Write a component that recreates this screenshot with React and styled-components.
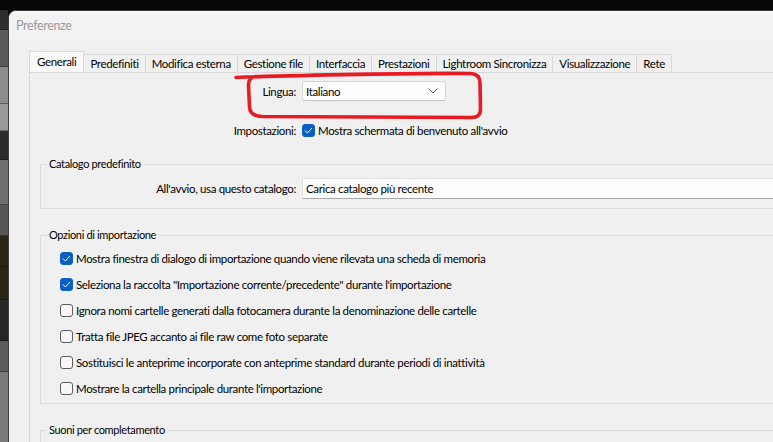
import React from "react";
import styled, { createGlobalStyle } from "styled-components";

const GlobalStyle = createGlobalStyle`
  html, body {
    margin: 0;
    padding: 0;
    background: #060606;
    overflow: hidden;
  }
  body {
    font-family: Lato, "Liberation Sans", sans-serif;
    font-size: 11.5px;
    letter-spacing: -0.35px;
    color: #000;
  }
`;

const Screen = styled.div`
  position: relative;
  width: 773px;
  height: 442px;
  overflow: hidden;
  box-sizing: border-box;
  padding-top: 10px;
  display: flex;
  background: #060606;
`;

const Backdrop = styled.div`
  width: 8px;
  flex-shrink: 0;
  display: flex;
  flex-direction: column;
  border-top: 1px solid #2a2a2a;
`;

const Strip = styled.div`
  height: ${({ h }) => h}px;
  background: ${({ bg }) => bg};
  border-bottom: 1px solid rgba(0, 0, 0, 0.35);
  flex-shrink: 0;
`;

const Window = styled.div`
  flex: 0 0 830px;
  display: flex;
  flex-direction: column;
  background: #f0f0f0;
  border-top-left-radius: 8px;
  border-top: 1px solid #3c3c3c;
  border-left: 1px solid #3c3c3c;
  overflow: hidden;
`;

const TitleBar = styled.div`
  height: 29px;
  flex-shrink: 0;
  display: flex;
  align-items: center;
  padding-left: 7px;
  background: #f3f3f3;
  color: #9b9b9b;
  font-size: 12.5px;
`;

const Body = styled.div`
  flex: 1;
  padding: 11px 0 0 20px;
  display: flex;
  flex-direction: column;
`;

const TabBar = styled.div`
  height: 21px;
  flex-shrink: 0;
  display: flex;
  align-items: flex-end;
`;

const Tab = styled.div`
  height: ${({ $active }) => ($active ? 21 : 18)}px;
  padding: 0 ${({ $active }) => ($active ? 7 : 6)}px;
  box-sizing: border-box;
  display: flex;
  align-items: center;
  padding-bottom: ${({ $active }) => ($active ? 2 : 0)}px;
  background: ${({ $active }) => ($active ? "#f9f9f9" : "#f0f0f0")};
  border: 1px solid #d9d9d9;
  border-bottom: none;
  margin-right: -1px;
  position: relative;
  z-index: ${({ $active }) => ($active ? 1 : 0)};
  white-space: nowrap;
`;

const Panel = styled.div`
  flex: 1;
  border-top: 1px solid #d9d9d9;
  border-left: 1px solid #d9d9d9;
  background: #f0f0f0;
  display: flex;
  flex-direction: column;
`;

const FormRow = styled.div`
  display: flex;
  align-items: center;
  flex-shrink: 0;
  gap: 6px;
  height: ${({ $h }) => $h}px;
  margin-top: ${({ $mt }) => $mt}px;
  margin-bottom: ${({ $mb }) => $mb || 0}px;
`;

const Label = styled.div`
  width: ${({ $w }) => $w}px;
  flex-shrink: 0;
  text-align: right;
  white-space: nowrap;
`;

const Select = styled.div`
  width: 144px;
  height: 20px;
  box-sizing: border-box;
  display: flex;
  align-items: center;
  justify-content: space-between;
  padding: 0 7px 0 3px;
  background: #fdfdfd;
  border: 1px solid #d6d6d6;
  border-bottom-color: #c4c4c4;
  border-radius: 3px;
`;

const TextField = styled.div`
  flex: 1;
  height: 21px;
  box-sizing: border-box;
  display: flex;
  align-items: center;
  padding-left: 3px;
  background: #fdfdfd;
  border: 1px solid #e2e2e2;
  border-bottom-color: #a8a8a8;
  white-space: nowrap;
`;

const Group = styled.fieldset`
  margin: ${({ $mt }) => $mt}px 0 0 10px;
  padding: 0;
  min-width: 0;
  flex-shrink: 0;
  border: 1px solid #dcdcdc;
`;

const Legend = styled.legend`
  font-size: 11px;
  line-height: 14px;
  padding: 0 2px;
  margin-left: 6px;
`;

const CheckList = styled.div`
  display: flex;
  flex-direction: column;
  padding: 3px 0 2px 19px;
  min-height: ${({ $minH }) => $minH || 0}px;
`;

const CheckRow = styled.div`
  display: flex;
  align-items: center;
  gap: 3px;
  height: ${({ $h }) => $h || 26}px;
  white-space: nowrap;
`;

const Box = styled.span`
  width: 13px;
  height: 13px;
  box-sizing: border-box;
  flex-shrink: 0;
  border-radius: 3px;
  display: flex;
  align-items: center;
  justify-content: center;
  background: ${({ $on }) => ($on ? "#0a60c2" : "#f8f8f8")};
  border: 1px solid ${({ $on }) => ($on ? "#0a60c2" : "#5c5c5c")};
`;

const Annotation = styled.svg`
  position: absolute;
  left: 0;
  top: 0;
  pointer-events: none;
`;

function Checkbox({ on }) {
  return (
    <Box $on={on}>
      {on && (
        <svg width="9" height="7" viewBox="0 0 9 7">
          <path d="M1 3.6 L3.4 6 L8 1" fill="none" stroke="#fff" strokeWidth="1" />
        </svg>
      )}
    </Box>
  );
}

const tabs = [
  "Generali",
  "Predefiniti",
  "Modifica esterna",
  "Gestione file",
  "Interfaccia",
  "Prestazioni",
  "Lightroom Sincronizza",
  "Visualizzazione",
  "Rete",
];

const importOptions = [
  ["Mostra finestra di dialogo di importazione quando viene rilevata una scheda di memoria", true],
  ['Seleziona la raccolta "Importazione corrente/precedente" durante l\'importazione', true],
  ["Ignora nomi cartelle generati dalla fotocamera durante la denominazione delle cartelle", false],
  ["Tratta file JPEG accanto ai file raw come foto separate", false],
  ["Sostituisci le anteprime incorporate con anteprime standard durante periodi di inattività", false],
  ["Mostrare la cartella principale durante l'importazione", false],
];

const strips = [
  [18, "#2e2e2e"],
  [36, "#5a5a5a"],
  [36, "#8c8c8c"],
  [26, "#9a9a9a"],
  [28, "#2c2c2c"],
  [44, "#6e6e6e"],
  [30, "#555555"],
  [30, "#2a2616"],
  [32, "#2a2616"],
  [40, "#262626"],
  [30, "#5c5c5c"],
  [80, "#7a7a7a"],
];

export default function App() {
  return (
    <>
      <GlobalStyle />
      <Screen>
        <Backdrop>
          {strips.map(([h, bg], i) => (
            <Strip key={i} h={h} bg={bg} />
          ))}
        </Backdrop>
        <Window>
          <TitleBar>Preferenze</TitleBar>
          <Body>
            <TabBar>
              {tabs.map((t, i) => (
                <Tab key={t} $active={i === 0}>
                  {t}
                </Tab>
              ))}
            </TabBar>
            <Panel>
              <FormRow $h={20} $mt={8}>
                <Label $w={266}>Lingua:</Label>
                <Select>
                  <span>Italiano</span>
                  <svg width="10" height="6" viewBox="0 0 10 6">
                    <path d="M0.5 0.5 L5 5 L9.5 0.5" fill="none" stroke="#606060" strokeWidth="1" />
                  </svg>
                </Select>
              </FormRow>
              <FormRow $h={20} $mt={19}>
                <Label $w={266}>Impostazioni:</Label>
                <CheckRow $h={20}>
                  <Checkbox on />
                  <span>Mostra schermata di benvenuto all'avvio</span>
                </CheckRow>
              </FormRow>

              <Group $mt={17}>
                <Legend>Catalogo predefinito</Legend>
                <FormRow $h={21} $mt={7} $mb={9}>
                  <Label $w={255}>All'avvio, usa questo catalogo:</Label>
                  <TextField>Carica catalogo più recente</TextField>
                </FormRow>
              </Group>

              <Group $mt={19}>
                <Legend>Opzioni di importazione</Legend>
                <CheckList>
                  {importOptions.map(([text, on]) => (
                    <CheckRow key={text}>
                      <Checkbox on={on} />
                      <span>{text}</span>
                    </CheckRow>
                  ))}
                </CheckList>
              </Group>

              <Group $mt={19}>
                <Legend>Suoni per completamento</Legend>
                <CheckList $minH={60} />
              </Group>
            </Panel>
          </Body>
        </Window>
        <Annotation width="773" height="442">
          <path
            d="M236 77.5 C300 75 420 73 471 73.5 Q480 74 480 83 L480.5 109 Q480.5 118 471 117.5 L262 116.5 Q250 116 249.5 107 L248.5 85 Q248.5 77.5 256 76.5"
            fill="none"
            stroke="#e81b22"
            strokeWidth="3.6"
            strokeLinecap="round"
            strokeLinejoin="round"
          />
        </Annotation>
      </Screen>
    </>
  );
}
